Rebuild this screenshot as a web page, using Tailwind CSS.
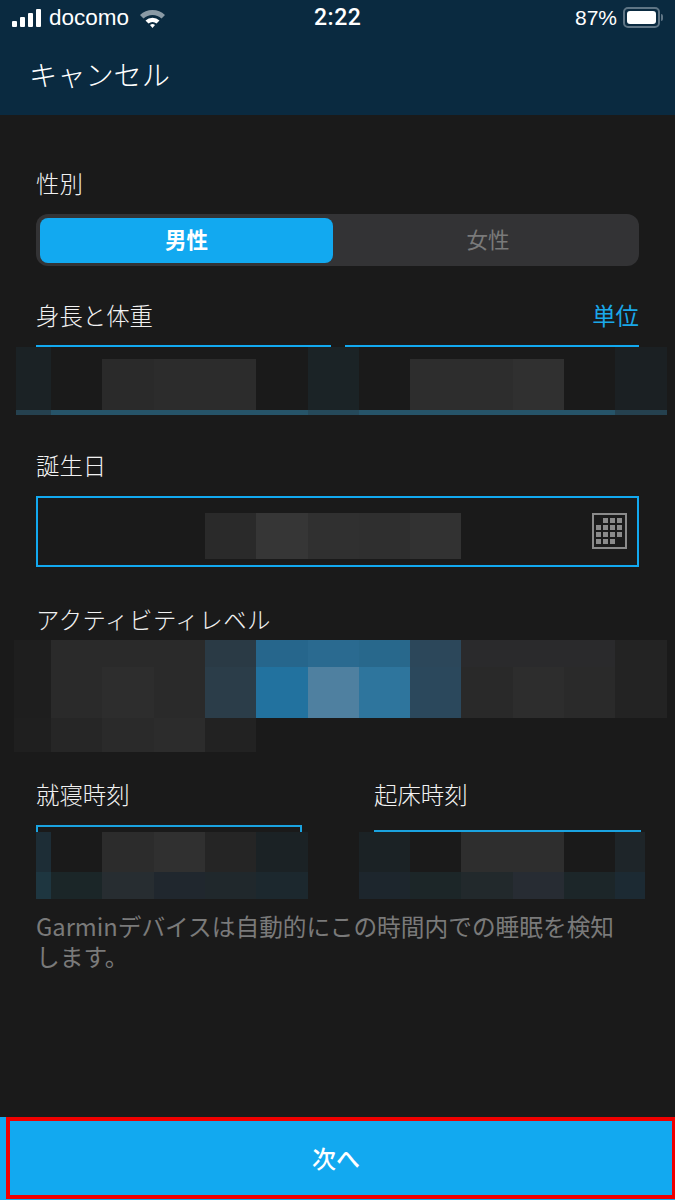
<!DOCTYPE html>
<html lang="ja">
<head>
<meta charset="UTF-8">
<meta name="viewport" content="width=device-width, initial-scale=1.0">
<title>Garmin</title>
<script src="https://cdn.jsdelivr.net/npm/@tailwindcss/browser@4"></script>
</head>
<body class="bg-[#1a1a1a] font-['Noto_Sans_CJK_JP','Noto_Sans',sans-serif] text-[23.4px] font-light text-[#f2f2f2]">
<div class="w-[675px] h-[1200px] overflow-hidden flex flex-col">

  <!-- status bar + nav -->
  <header class="h-[115px] shrink-0 bg-[#0a2a40] text-white">
    <div class="h-[36px] flex items-center relative font-['Liberation_Sans',sans-serif] font-normal text-[22.5px]">
      <svg class="ml-[12px]" width="30" height="20" viewBox="0 0 30 20" fill="#fff">
        <rect x="0" y="13" width="5" height="6" rx="1"/>
        <rect x="8" y="9" width="5" height="10" rx="1"/>
        <rect x="16" y="5" width="5" height="14" rx="1"/>
        <rect x="24" y="1" width="5" height="18" rx="1"/>
      </svg>
      <span class="ml-[7px]">docomo</span>
      <svg class="ml-[10px]" width="27" height="21" viewBox="0 0 27 21">
        <path d="M1 7 A18 18 0 0 1 26 7 L22.5 10.5 A13 13 0 0 0 4.5 10.5 Z" fill="#8a9aa5"/>
        <path d="M6.5 12.5 A10 10 0 0 1 20.5 12.5 L17.5 15.5 A6 6 0 0 0 9.5 15.5 Z" fill="#fff"/>
        <path d="M11 17 A4 4 0 0 1 16 17 L13.5 20 Z" fill="#fff"/>
      </svg>
      <span class="absolute left-[314px] font-['Roboto',sans-serif] font-medium text-[23px] tracking-[0.5px]">2:22</span>
      <span class="absolute left-[575px] text-[21px]">87%</span>
      <div class="absolute left-[623px] top-[7px] w-[37px] h-[21px] rounded-[5px] border-2 border-[#5f7585] p-[2px]">
        <div class="w-[29px] h-full rounded-[3px] bg-white"></div>
      </div>
      <div class="absolute left-[661px] top-[14px] w-[2px] h-[7px] rounded-r bg-[#5f7585]"></div>
    </div>
    <div class="pl-[29px] mt-[5px] h-[60px] text-[28.2px] leading-[66px]">キャンセル</div>
  </header>

  <main class="h-[1002px] shrink-0 relative">
    <div class="ml-[36px] mt-[54px] h-[30px] leading-[29px]">性別</div>

    <div class="ml-[36px] mt-[15px] w-[603px] h-[52px] rounded-[12px] bg-[#333335] p-[4px] flex">
      <div class="w-[293px] h-[45px] rounded-[8px] bg-[#12a9f0] text-white font-bold text-[21.5px] leading-[41px] text-center">男性</div>
      <div class="flex-1 h-[45px] pl-[8px] text-[#7a7a7a] font-normal text-[21.5px] leading-[41px] text-center">女性</div>
    </div>

    <div class="ml-[36px] mr-[36px] mt-[35px] h-[30px] leading-[29px] flex justify-between">
      <span>身長と体重</span>
      <span class="text-[#1aa7e8] font-normal">単位</span>
    </div>

    <div class="ml-[36px] mt-[14px] flex gap-[14px]">
      <div class="w-[295px] h-[2px] bg-[#12a9f0]"></div>
      <div class="w-[294px] h-[2px] bg-[#12a9f0]"></div>
    </div>

    <!-- blurred height / weight -->
    <div class="ml-[16px] w-[651px] h-[68px] flex flex-col">
      <div class="h-[63px] flex items-end">
        <div class="w-[35px] h-full bg-[#1b2225]"></div>
        <div class="w-[51px]"></div>
        <div class="w-[52px] h-[51px] bg-[#2a2a2a]"></div>
        <div class="w-[102px] h-[51px] bg-[#2c2c2c]"></div>
        <div class="w-[52px]"></div>
        <div class="w-[51px] h-full bg-[#1b2326]"></div>
        <div class="w-[51px]"></div>
        <div class="w-[103px] h-[51px] bg-[#2d2d2d]"></div>
        <div class="w-[51px] h-[51px] bg-[#303030]"></div>
        <div class="w-[51px]"></div>
        <div class="w-[52px] h-full bg-[#1b2023]"></div>
      </div>
      <div class="h-[5px] flex">
        <div class="w-[35px] bg-[#25414f]"></div>
        <div class="w-[257px] bg-[#265469]"></div>
        <div class="w-[51px] bg-[#25495a]"></div>
        <div class="w-[256px] bg-[#265469]"></div>
        <div class="w-[52px] bg-[#25414f]"></div>
      </div>
    </div>

    <div class="ml-[36px] mt-[37px] h-[30px] leading-[27px]">誕生日</div>

    <div class="ml-[36px] mt-[14px] w-[603px] h-[71px] border-2 border-[#12a9f0] relative flex items-start">
      <div class="ml-[167px] mt-[15px] h-[46px] flex">
        <div class="w-[51px] bg-[#2a2a2a]"></div>
        <div class="w-[52px] bg-[#363636]"></div>
        <div class="w-[51px] bg-[#303030]"></div>
        <div class="w-[51px] bg-[#2f2f2f]"></div>
        <div class="w-[51px] bg-[#323232]"></div>
      </div>
      <svg class="absolute left-[554px] top-[15px]" width="35" height="36" viewBox="0 0 35 36" fill="#8a8a8a">
        <rect x="1" y="1" width="33" height="34" fill="none" stroke="#8a8a8a" stroke-width="2"/>
        <rect x="11" y="5" width="5" height="5"/><rect x="18" y="5" width="5" height="5"/><rect x="25" y="5" width="5" height="5"/>
        <rect x="4" y="12" width="5" height="5"/><rect x="11" y="12" width="5" height="5"/><rect x="18" y="12" width="5" height="5"/><rect x="25" y="12" width="5" height="5"/>
        <rect x="4" y="19" width="5" height="5"/><rect x="11" y="19" width="5" height="5"/><rect x="18" y="19" width="5" height="5"/><rect x="25" y="19" width="5" height="5"/>
        <rect x="4" y="26" width="5" height="5"/><rect x="11" y="26" width="5" height="5"/><rect x="18" y="26" width="5" height="5"/>
      </svg>
    </div>

    <div class="ml-[36px] mt-[37px] h-[30px] leading-[31px] tracking-[0.5px]">アクティビティレベル</div>

    <!-- blurred activity level -->
    <div class="ml-[14px] mt-[6px] w-[653px]">
      <div class="h-[27px] flex">
        <div class="w-[37px] bg-[#1e1e1e]"></div>
        <div class="w-[154px] bg-[#2a2a2a]"></div>
        <div class="w-[51px] bg-[#2a3a45]"></div>
        <div class="w-[52px] bg-[#26668c]"></div>
        <div class="w-[51px] bg-[#2a6a90]"></div>
        <div class="w-[51px] bg-[#28688c]"></div>
        <div class="w-[51px] bg-[#2c475a]"></div>
        <div class="w-[154px] bg-[#2a2a2c]"></div>
        <div class="w-[52px] bg-[#232323]"></div>
      </div>
      <div class="h-[51px] flex">
        <div class="w-[37px] bg-[#1e1e1e]"></div>
        <div class="w-[51px] bg-[#2a2a2a]"></div>
        <div class="w-[52px] bg-[#2d2d2d]"></div>
        <div class="w-[51px] bg-[#2a2a2a]"></div>
        <div class="w-[51px] bg-[#2b3d49]"></div>
        <div class="w-[52px] bg-[#22729f]"></div>
        <div class="w-[51px] bg-[#4f80a0]"></div>
        <div class="w-[51px] bg-[#2e759d]"></div>
        <div class="w-[51px] bg-[#2b485c]"></div>
        <div class="w-[52px] bg-[#292929]"></div>
        <div class="w-[51px] bg-[#2d2d2d]"></div>
        <div class="w-[51px] bg-[#2a2a2a]"></div>
        <div class="w-[52px] bg-[#232323]"></div>
      </div>
      <div class="h-[34px] flex">
        <div class="w-[37px] bg-[#1f1f1f]"></div>
        <div class="w-[51px] bg-[#262626]"></div>
        <div class="w-[52px] bg-[#2a2a2a]"></div>
        <div class="w-[51px] bg-[#2c2c2c]"></div>
        <div class="w-[51px] bg-[#222222]"></div>
      </div>
    </div>

    <div class="ml-[36px] mt-[28px] h-[30px] leading-[29px] flex">
      <span class="w-[338px]">就寝時刻</span>
      <span>起床時刻</span>
    </div>

    <div class="ml-[36px] mt-[15px] h-[7px] flex items-start">
      <div class="w-[266px] h-[7px] border-2 border-b-0 border-[#1aa3e0]"></div>
      <div class="ml-[72px] mt-[5px] w-[267px] h-[2px] bg-[#1aa3e0]"></div>
    </div>

    <!-- blurred times -->
    <div class="ml-[36px] flex">
      <div class="w-[272px]">
        <div class="h-[40px] flex">
          <div class="w-[15px] bg-[#1d2d36]"></div>
          <div class="w-[51px]"></div>
          <div class="w-[52px] bg-[#2c2c2c]"></div>
          <div class="w-[51px] bg-[#303030]"></div>
          <div class="w-[51px] bg-[#252525]"></div>
          <div class="w-[52px] bg-[#1b2225]"></div>
        </div>
        <div class="h-[27px] flex">
          <div class="w-[15px] bg-[#1e3640]"></div>
          <div class="w-[51px] bg-[#1b2628]"></div>
          <div class="w-[52px] bg-[#272d31]"></div>
          <div class="w-[51px] bg-[#20272e]"></div>
          <div class="w-[51px] bg-[#20282c]"></div>
          <div class="w-[52px] bg-[#1c282e]"></div>
        </div>
      </div>
      <div class="ml-[51px] w-[286px]">
        <div class="h-[40px] flex">
          <div class="w-[51px] bg-[#1b2225]"></div>
          <div class="w-[51px]"></div>
          <div class="w-[103px] bg-[#2e2e2e]"></div>
          <div class="w-[51px]"></div>
          <div class="w-[30px] bg-[#1e2529]"></div>
        </div>
        <div class="h-[27px] flex">
          <div class="w-[51px] bg-[#1d262d]"></div>
          <div class="w-[51px] bg-[#1c2628]"></div>
          <div class="w-[52px] bg-[#22292c]"></div>
          <div class="w-[51px] bg-[#272c33]"></div>
          <div class="w-[51px] bg-[#1c2629]"></div>
          <div class="w-[30px] bg-[#1c2a33]"></div>
        </div>
      </div>
    </div>

    <p class="ml-[36px] mt-[12px] w-[590px] leading-[30px] text-[23.7px] text-[#7a7a7a] font-normal">Garminデバイスは自動的にこの時間内での睡眠を検知します。</p>
  </main>

  <div class="flex-1 bg-[#12a9f0] pl-[6px]">
    <button class="w-full h-[82px] pr-[10px] border-4 border-r-[3px] border-[#f00000] bg-[#12a9f0] text-white font-medium text-[24px]">次へ</button>
  </div>
</div>
</body>
</html>
